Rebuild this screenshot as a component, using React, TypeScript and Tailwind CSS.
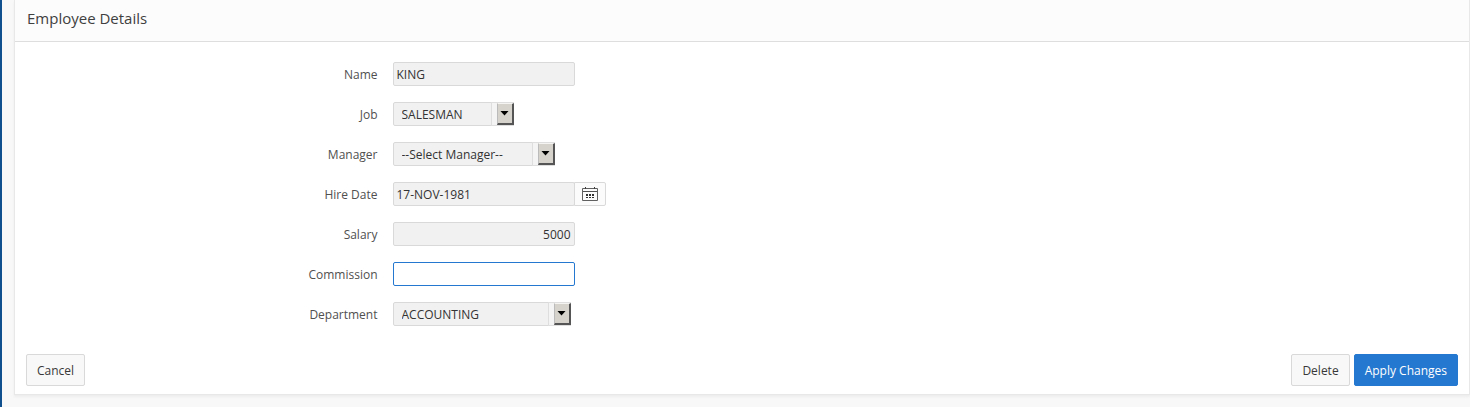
import { clsx } from 'clsx';
import type { ReactNode } from 'react';

const fieldClass =
  'block h-6 rounded-xs border border-[#d9d9d9] bg-[#f1f1f1] px-[3px] text-xs text-[#333] outline-none focus:border-[#2578cf] focus:bg-white';

interface FieldProps {
  id: string;
  label: string;
  children: ReactNode;
}

function Field({ id, label, children }: FieldProps) {
  return (
    <div className="flex h-10 items-center">
      <label htmlFor={id} className="w-1/4 shrink-0 pt-0.5 pr-px text-right text-xs text-[#505050]">
        {label}
      </label>
      <div className="ml-3.5 flex items-center">{children}</div>
    </div>
  );
}

interface SelectProps {
  id: string;
  value: string;
  className: string;
}

function Select({ id, value, className }: SelectProps) {
  return (
    <div className={clsx('relative', className)}>
      <select
        id={id}
        defaultValue={value}
        className="block h-6 w-full appearance-none rounded-xs border border-[#d9d9d9] bg-[#f1f1f1] pt-0.5 pr-6 pl-2 text-xs text-[#333] outline-none"
      >
        <option>{value}</option>
      </select>
      <span className="pointer-events-none absolute inset-y-0 right-0 flex w-[23px] border-y border-l border-[#dedede] bg-[#f4f4f4] pl-[5px]">
        <span className="flex h-[22px] w-[17px] items-center justify-center border-t border-r-2 border-b-2 border-l border-t-[#f5f4f2] border-r-[#555] border-b-[#555] border-l-[#bbb] bg-[#d6d3cc]">
          <svg width="9" height="5" viewBox="0 0 9 5" aria-hidden="true">
            <path d="M.5 0h8l-4 4.5z" fill="#000" />
          </svg>
        </span>
      </span>
    </div>
  );
}

function CalendarIcon() {
  return (
    <svg width="16" height="16" viewBox="0 0 16 16" fill="none" aria-hidden="true">
      <path d="M.5 2.5h15v12H.5z" stroke="#606060" />
      <path d="M1 5.5h14" stroke="#505050" />
      <path d="M3.5 1v2M12.5 1v2" stroke="#404040" />
      <path d="M4 8h2v2H4zM7 8h2v2H7zM10 8h2v2h-2zM4 11h2v1H4zM7 11h2v1H7zM10 11h2v1h-2z" fill="#303030" />
    </svg>
  );
}

interface ButtonProps {
  children: ReactNode;
  hot?: boolean;
}

function Button({ children, hot }: ButtonProps) {
  return (
    <button
      type="button"
      className={clsx(
        'h-8 rounded-xs border px-2.5 pt-0.5 text-xs',
        hot ? 'border-[#2578cf] bg-[#2578cf] text-white' : 'border-[#d9d9d9] bg-[#f8f8f8] text-[#383838]'
      )}
    >
      {children}
    </button>
  );
}

export default function App() {
  return (
    <div className="min-h-screen border-l-2 border-[#11508f] bg-[#f8f8f8] pl-3 font-['Open_Sans','Noto_Sans',sans-serif]">
      <form className="border-x border-b border-[#e8e8e8] bg-white shadow-[0_2px_2px_#ededed]">
        <header className="flex h-[42px] items-center border-b border-[#dedede] bg-[#fcfcfc] px-3 pb-1">
          <h1 className="text-[15px] text-[#404040]">Employee Details</h1>
        </header>

        <div className="pt-3 pb-5">
          <Field id="name" label="Name">
            <input id="name" type="text" defaultValue="KING" className={clsx(fieldClass, 'w-[182px]')} />
          </Field>
          <Field id="job" label="Job">
            <Select id="job" value="SALESMAN" className="w-[121px]" />
          </Field>
          <Field id="manager" label="Manager">
            <Select id="manager" value="--Select Manager--" className="w-[162px]" />
          </Field>
          <Field id="hire-date" label="Hire Date">
            <input id="hire-date" type="text" defaultValue="17-NOV-1981" className={clsx(fieldClass, 'w-[182px]')} />
            <button
              type="button"
              aria-label="Calendar"
              className="-ml-px flex h-6 w-8 items-center justify-center rounded-r-xs border border-[#d9d9d9] bg-[#fbfbfb]"
            >
              <CalendarIcon />
            </button>
          </Field>
          <Field id="salary" label="Salary">
            <input id="salary" type="text" defaultValue="5000" className={clsx(fieldClass, 'w-[182px] text-right')} />
          </Field>
          <Field id="commission" label="Commission">
            <input
              id="commission"
              type="text"
              autoFocus
              className={clsx(fieldClass, 'w-[182px] caret-transparent')}
            />
          </Field>
          <Field id="department" label="Department">
            <Select id="department" value="ACCOUNTING" className="w-[178px]" />
          </Field>
        </div>

        <footer className="flex items-center justify-between px-[11px] pb-2">
          <Button>Cancel</Button>
          <div className="flex gap-1">
            <Button>Delete</Button>
            <Button hot>Apply Changes</Button>
          </div>
        </footer>
      </form>
    </div>
  );
}
